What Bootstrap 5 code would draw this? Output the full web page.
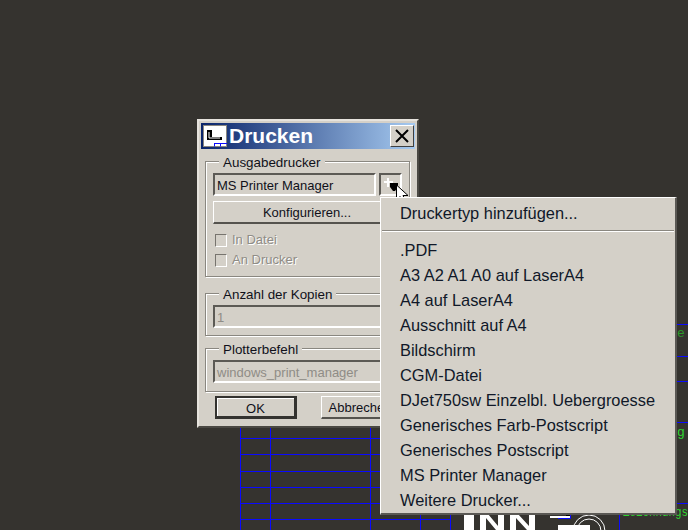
<!DOCTYPE html>
<html lang="de">
<head>
  <title>Drucken</title>
  <meta charset="UTF-8" />
  <meta name="viewport" content="width=device-width, initial-scale=1.0" />
  <link href="https://cdn.jsdelivr.net/npm/bootstrap@5.3.0/dist/css/bootstrap.min.css" rel="stylesheet">

  <style>
    html, body { height: 100%; }

    body {
      background-color: #35332f;
      font-family: "Liberation Sans", Arial, sans-serif;
      overflow: hidden;
    }

    .cad-drawing {
      position: absolute;
      left: 0;
      top: 0;
    }

    /* raised / sunken win9x edges */
    .print-dialog {
      position: absolute;
      left: 197px;
      top: 119px;
      width: 222px;
      height: 309px;
      background-color: #d4d0c8;
      border: 2px solid;
      border-color: #e6e3dd #4a4843 #4a4843 #e6e3dd;
      padding: 2px;
      font-size: 13px;
      color: #10101a;
    }

    .title-strip {
      height: 26px;
      flex: none;
      background: linear-gradient(to right, #0a246a, #a6caf0);
      padding: 2px 1px 2px 2px;
      color: #fff;
    }

    .title-icon {
      width: 24px;
      height: 22px;
      flex: none;
    }

    .title-text {
      font-size: 21px;
      font-weight: 700;
      line-height: 22px;
      margin-left: 2px;
    }

    .close-box {
      width: 24px;
      height: 22px;
      background-color: #d4d0c8;
      border: 1px solid;
      border-color: #fff #404040 #404040 #fff;
      padding: 0;
    }

    .group-box {
      position: relative;
      flex: none;
      border: 1px solid #8a8780;
      box-shadow: 1px 1px 0 #fff, inset 1px 1px 0 #fff;
      margin: 0 5px 0 4px;
      padding: 11px 7px 7px 7px;
    }

    .group-printer { margin-top: 12px; height: 116px; }
    .group-copies { margin-top: 16px; height: 43px; }
    .group-plotter { margin-top: 12px; height: 44px; }

    .group-label {
      position: absolute;
      left: 13px;
      top: -7px;
      background-color: #d4d0c8;
      padding: 0 4px;
      font-size: 13.4px;
      line-height: 15px;
      white-space: nowrap;
    }

    .sunken-field {
      height: 23px;
      line-height: 21px;
      padding-left: 2px;
      border: 2px solid;
      border-color: #5c5a55 #fff #fff #5c5a55;
      white-space: nowrap;
      overflow: hidden;
    }

    .field-off { color: #8f8c86; }

    .printer-row { gap: 3px; }

    .arrow-btn {
      width: 23px;
      height: 23px;
      flex: none;
      border: 2px solid;
      border-color: #5c5a55 #fff #fff #5c5a55;
    }

    .raised-btn {
      height: 23px;
      line-height: 18px;
      background-color: #d4d0c8;
      color: #10101a;
      text-align: center;
      font-size: 13px;
      padding: 2px 0 0 0;
      border-radius: 0;
      border: 1px solid;
      border-color: #fff #55534e #55534e #fff;
      border-width: 1px 2px 2px 1px;
    }

    .config-btn { margin-top: 5px; }

    .button-row {
      padding: 4px 0 0 14px;
      gap: 24px;
    }

    .ok-btn {
      width: 82px;
      border: 2px solid #33322f;
      border-right-width: 3px;
      border-bottom-width: 3px;
      box-shadow: inset 1px 1px 0 #fff;
    }

    .cancel-btn { width: 79px; }

    .check-list { margin-top: 6px; }

    .check-row {
      height: 20px;
      color: #8f8c86;
      text-shadow: 1px 1px 0 #fff;
      padding-left: 2px;
    }

    .check-cell {
      width: 12px;
      height: 13px;
      margin-right: 5px;
      border: 1px solid;
      border-color: #77746e #fff #fff #77746e;
      flex: none;
    }

    .printer-menu {
      position: absolute;
      left: 380px;
      top: 197px;
      width: 297px;
      height: 318px;
      display: block;
      margin: 0;
      padding: 3px 0 0 0;
      background-color: #d4d0c8;
      border: 0;
      border-radius: 0;
      border-top: 1px solid #fff;
      border-left: 1px solid #fff;
      border-right: 2px solid #5a5854;
      border-bottom: 2px solid #5a5854;
      font-size: 16.4px;
    }

    .printer-menu .dropdown-item {
      height: 25px;
      line-height: 25px;
      padding: 0 0 0 19px;
      color: #101828;
      white-space: nowrap;
    }

    .menu-rule {
      height: 2px;
      margin: 4px 1px 6px 1px;
      background-color: #fff;
      border-top: 1px solid #8a8780;
    }

    .cad-note {
      font-family: "Liberation Mono", monospace;
      font-size: 13px;
      fill: #2fd62f;
    }

    .cad-note-dim { fill: #2a9a2a; }
  </style>
</head>
<body>

  <!-- drawing behind the dialog -->
  <svg class="cad-drawing" width="688" height="530" viewBox="0 0 688 530">
    <g stroke="#0a0aff" stroke-width="1" shape-rendering="crispEdges">
      <path d="M240.5 425V530M270.5 425V530M370.5 425V530M420.5 514V530M450.5 514V530" />
      <path d="M240 438.5H380M240 454.5H380M240 471.5H380M240 487.5H380M240 503.5H380M240 519.5H451" />
      <path d="M677 324.5H688M677 356.5H688M677 381.5H688M677 422.5H688M677 503.5H688" />
      <path d="M619.5 515V530M558 518.500H570.500V514" />
    </g>
    <g fill="#fff">
      <path d="M464 514h10v16h-10z" />
      <path d="M480 514h8l10 12v-12h6v16h-8l-10-12v12h-6z" />
      <path d="M510 514h8l11 12v-12h6v16h-8l-11-12v12h-6z" />
      <path d="M550 516h20v2h-20z" />
      <rect x="558" y="525" width="32" height="5" />
    </g>
    <circle cx="589" cy="531" r="16" fill="none" stroke="#fff" />
    <circle cx="589" cy="531" r="12" fill="none" stroke="#fff" />
    <text class="cad-note" x="623" y="516" textLength="65" lengthAdjust="spacingAndGlyphs">Zeichnungs</text>
    <text class="cad-note cad-note-dim" x="677" y="337">e</text>
    <text class="cad-note" x="677" y="436">g</text>
  </svg>

  <div class="print-dialog d-flex flex-column">
    <div class="title-strip d-flex align-items-center">
      <svg class="title-icon" viewBox="0 0 24 22">
        <rect x="0.500" y="0.500" width="23" height="21" fill="#fff" stroke="#8a8780" />
        <path d="M4 5h5v7h10v3H4z" fill="#000" />
        <path d="M6 7v6h11" stroke="#fff" fill="none" />
        <path d="M11 18.500h13M11.500 18.500v3M17.500 18.500v3" stroke="#0a0aff" fill="none" />
      </svg>
      <span class="title-text flex-grow-1">Drucken</span>
      <button class="close-box d-flex align-items-center justify-content-center" type="button" aria-label="Schliessen">
        <svg width="14" height="14" viewBox="0 0 14 14"><path d="M1 1l12 12M13 1L1 13" stroke="#000" stroke-width="2" /></svg>
      </button>
    </div>

    <div class="group-box group-printer">
      <span class="group-label">Ausgabedrucker</span>
      <div class="printer-row d-flex">
        <div class="sunken-field flex-grow-1">MS Printer Manager</div>
        <div class="arrow-btn"></div>
      </div>
      <button class="raised-btn config-btn w-100 d-block" type="button">Konfigurieren...</button>
      <div class="check-list">
        <div class="check-row d-flex align-items-center"><span class="check-cell"></span>In Datei</div>
        <div class="check-row d-flex align-items-center"><span class="check-cell"></span>An Drucker</div>
      </div>
    </div>

    <div class="group-box group-copies">
      <span class="group-label">Anzahl der Kopien</span>
      <div class="sunken-field field-off">1</div>
    </div>

    <div class="group-box group-plotter">
      <span class="group-label">Plotterbefehl</span>
      <div class="sunken-field field-off">windows_print_manager</div>
    </div>

    <div class="button-row d-flex">
      <button class="raised-btn ok-btn" type="button">OK</button>
      <button class="raised-btn cancel-btn" type="button">Abbrechen</button>
    </div>
  </div>

  <ul class="printer-menu dropdown-menu show list-unstyled">
    <li><a class="dropdown-item" href="#">Druckertyp hinzufügen...</a></li>
    <li><div class="menu-rule"></div></li>
    <li><a class="dropdown-item" href="#">.PDF</a></li>
    <li><a class="dropdown-item" href="#">A3 A2 A1 A0 auf LaserA4</a></li>
    <li><a class="dropdown-item" href="#">A4 auf LaserA4</a></li>
    <li><a class="dropdown-item" href="#">Ausschnitt auf A4</a></li>
    <li><a class="dropdown-item" href="#">Bildschirm</a></li>
    <li><a class="dropdown-item" href="#">CGM-Datei</a></li>
    <li><a class="dropdown-item" href="#">DJet750sw Einzelbl. Uebergroesse</a></li>
    <li><a class="dropdown-item" href="#">Generisches Farb-Postscript</a></li>
    <li><a class="dropdown-item" href="#">Generisches Postscript</a></li>
    <li><a class="dropdown-item" href="#">MS Printer Manager</a></li>
    <li><a class="dropdown-item" href="#">Weitere Drucker...</a></li>
  </ul>

  <!-- crosshair and mouse pointer over the arrow button -->
  <svg class="cad-drawing" width="688" height="530" viewBox="0 0 688 530">
    <path d="M388 178v9M384 182h9" stroke="#fff" stroke-width="2" shape-rendering="crispEdges" />
    <path d="M390 183h8v4l-3 4h-2l-3-4z" fill="#000" />
    <path d="M396.500 185v15l3.500-3.500 3 7 3-1.300-3-6.700h5z" fill="#fff" stroke="#000" stroke-width="1" />
  </svg>

  <script src="https://cdn.jsdelivr.net/npm/bootstrap@5.3.0/dist/js/bootstrap.bundle.min.js"></script>
</body>
</html>
